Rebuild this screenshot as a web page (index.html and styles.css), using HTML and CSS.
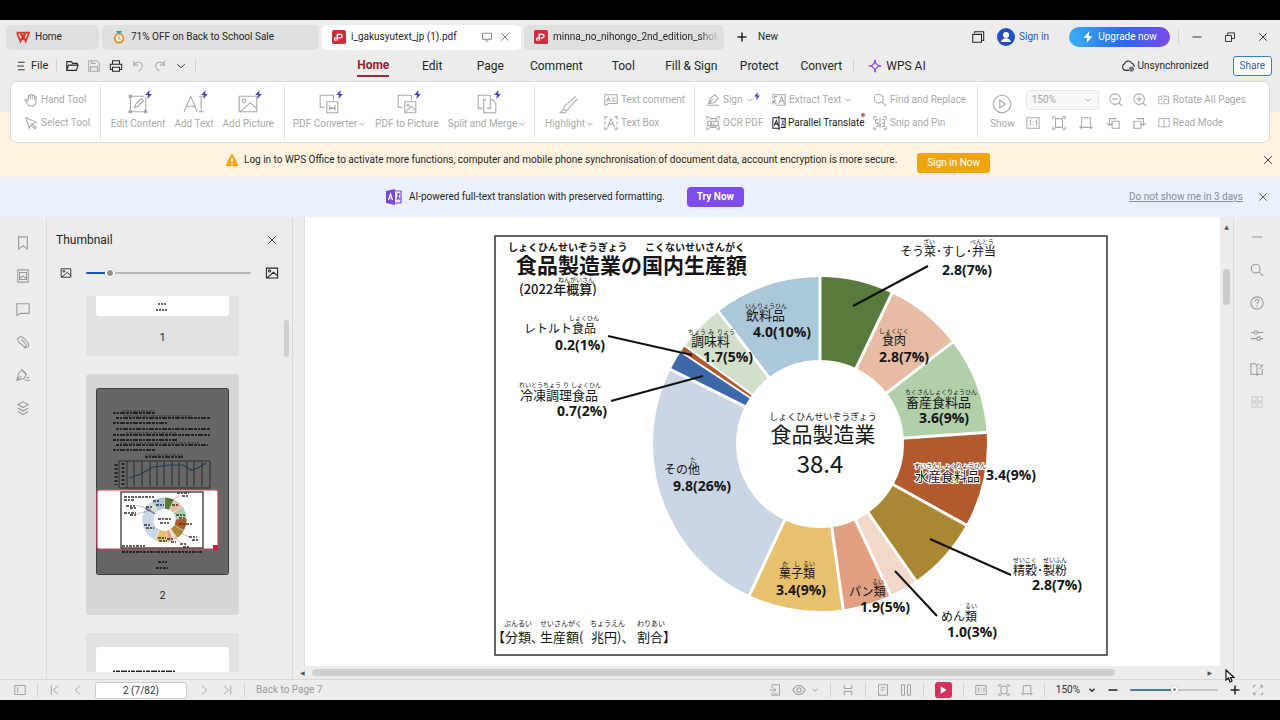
FILE: index.html
```html
<!DOCTYPE html>
<html lang="en">
<head>
<meta charset="utf-8">
<title>i_gakusyutext_jp (1).pdf - WPS Office</title>
<link rel="stylesheet" href="styles.css">
</head>
<body>
<svg class="sprite" aria-hidden="true">
  <symbol id="close" viewBox="0 0 16 16"><path d="M3 3l10 10M13 3L3 13"/></symbol>
  <symbol id="bolt" viewBox="0 0 16 16"><path class="solid" d="M10 0L2 9h5l-1 7 8-9H9z"/></symbol>
  <symbol id="caret" viewBox="0 0 16 16"><path d="M3 5.500l5 5 5-5"/></symbol>
  <symbol id="prev" viewBox="0 0 16 16"><path d="M10.500 2l-6 6 6 6"/></symbol>
  <symbol id="next" viewBox="0 0 16 16"><path d="M5.500 2l6 6-6 6"/></symbol>
  <symbol id="first" viewBox="0 0 16 16"><path d="M3 2v12M12 2L6 8l6 6"/></symbol>
  <symbol id="last" viewBox="0 0 16 16"><path d="M13 2v12M4 2l6 6-6 6"/></symbol>
  <symbol id="menu" viewBox="0 0 16 16"><path d="M4 3h9M3 8h9M4 13h9"/></symbol>
  <symbol id="open" viewBox="0 0 16 16"><path d="M2 13V3h5l2 2h5v2M2 13l2-6h11l-2 6z"/></symbol>
  <symbol id="save" viewBox="0 0 16 16"><path d="M2 2h9l3 3v9H2zM4 14V9h8v5M5 2v3h5"/></symbol>
  <symbol id="print" viewBox="0 0 16 16"><path d="M4 6V2h8v4M4 12H1.500V6h13v6H12M4 9.500h8V14H4z"/></symbol>
  <symbol id="undo" viewBox="0 0 16 16"><path d="M3 2v5h5M3 7c3-5 10-4 10 1 0 3-2 4-4 6"/></symbol>
  <symbol id="redo" viewBox="0 0 16 16"><path d="M13 2v5H8M13 7C10 2 3 3 3 8c0 3 2 4 4 6"/></symbol>
  <symbol id="screen" viewBox="0 0 16 16"><path d="M2 3h12v8H2zM6 13.500h4"/></symbol>
  <symbol id="plus" viewBox="0 0 16 16"><path d="M8 2v12M2 8h12"/></symbol>
  <symbol id="minus" viewBox="0 0 16 16"><path d="M2 8h12"/></symbol>
  <symbol id="windows" viewBox="0 0 16 16"><path d="M2 5h10v9H2zM4 3.500V2h10.500v10H13"/></symbol>
  <symbol id="restore" viewBox="0 0 16 16"><path d="M2 6h8v8H2zM5 6V2.500h9V10h-4"/></symbol>
  <symbol id="cloud" viewBox="0 0 16 16"><path d="M9 13H5a4 4 0 01-1-7.500 4.500 4.500 0 018.500-.5A3.500 3.500 0 0115 9"/><circle cx="12" cy="11.500" r="3" fill="#778" stroke="none"/></symbol>
  <symbol id="pdf" viewBox="0 0 16 16"><rect x="0" y="0" width="16" height="16" rx="2" fill="#d6293a" stroke="none"/><path d="M6 12V5h3.500a1.800 1.800 0 010 4H4.500a1.300 1.300 0 100 2.500" stroke="#fff" stroke-width="1.500"/></symbol>
  <symbol id="hand" viewBox="0 0 16 16"><path d="M5 10L3 7.500c-1-1-2.500 0-1.500 1.500l3 4.500c2 2.500 8 2 9-2l.5-6.500c0-1.300-1.800-1.300-1.800 0V8M5 8V3.500C5 2 7 2 7 3.500V7M7 3c0-2 2.500-2 2.500 0v4M9.500 3.500c0-1.500 2.500-1.500 2.500 0V8"/></symbol>
  <symbol id="arrow" viewBox="0 0 16 16"><path d="M2 2l12 5-5 2 5 4-1.500 1.500L8 10.500 6 14z"/></symbol>
  <symbol id="edit" viewBox="0 0 20 20"><path d="M4 3h12M4 17h12M3 4v12M17 4v12M7 13l1-3 5-5 2 2-5 5z"/><path class="solid" d="M1.500 1.500h3v3h-3zM15.500 15.500h3v3h-3zM1.500 15.500h3v3h-3z"/></symbol>
  <symbol id="addtext" viewBox="0 0 20 20"><path d="M1 17L7 3l6 14M3 12h8M14 3h5M14 17h5M16.500 3v14"/></symbol>
  <symbol id="picture" viewBox="0 0 20 20"><path d="M2 3h16v14H2zM3 17l9-8 6 5"/><circle cx="6.500" cy="7" r="1.500"/></symbol>
  <symbol id="convert" viewBox="0 0 20 20"><path d="M6 13H2V2h12v5M8 8h10v10H8zM10.500 11v4l2.500-2 2.500 2v-4"/></symbol>
  <symbol id="topic" viewBox="0 0 20 20"><path d="M6 13H2V2h12v5M8 8h10v10H8zM9 17l5-5 4 4"/><circle cx="11" cy="11" r="1"/></symbol>
  <symbol id="split" viewBox="0 0 20 20"><path d="M6 14H2V2h11v3M9 6H7v12h11V9l-3-3h-2v8h-3"/></symbol>
  <symbol id="marker" viewBox="0 0 20 20"><path d="M16 3L6 12l-1 3 3 1 10-11M5 15l-3 3h5l1-2"/></symbol>
  <symbol id="note" viewBox="0 0 16 16"><path d="M1 2h14v10H5l-3 2H1zM3 10l2-5 2 5M4 8h2M9 6h4M9 9h4"/></symbol>
  <symbol id="textbox" viewBox="0 0 16 16"><path d="M1 4V1h3M12 1h3v3M15 12v3h-3M4 15H1v-3M1 6v4M15 6v4M4 13l4-10 4 10M5.500 9h5"/></symbol>
  <symbol id="sign" viewBox="0 0 16 16"><path d="M1 14h14M3 12l2-6 5-4 4 4-4 5zM4 11l4-4"/></symbol>
  <symbol id="ocr" viewBox="0 0 16 16"><path d="M1 4V1h3M12 1h3v3M15 12v3h-3M4 15H1v-3M4 3h8v3M4 13h8M2 6h12v5H2zM5 10l1-3 1 3M9 7v3"/></symbol>
  <symbol id="extract" viewBox="0 0 16 16"><path d="M1 6V2h14v12H5M1 9l4 4M1 13V9h4M8 12l3-8 3 8M9 9h4M6 4H3v3"/></symbol>
  <symbol id="translate" viewBox="0 0 16 16"><path d="M9 2H1v12h8M8 0v16M10 3h5v10h-5M2.500 11L5 5l2 6M3.500 9H6"/><path d="M11 6h3M12.500 5v2l-1.500 4M12 8l2 3" stroke="#5a4fd0"/></symbol>
  <symbol id="search" viewBox="0 0 16 16"><circle cx="6.500" cy="6.500" r="5"/><path d="M10 10l5 5"/></symbol>
  <symbol id="snip" viewBox="0 0 16 16"><path d="M1 4V1h3M12 1h3v3M15 12v3h-3M4 15H1v-3M6 4H3v4h3v4H3M8 2v12M10 4h3v8h-3M10 8h3"/></symbol>
  <symbol id="play" viewBox="0 0 20 20"><circle cx="10" cy="10" r="8"/><path d="M8 6.500v7l5-3.500z"/></symbol>
  <symbol id="zoomout" viewBox="0 0 16 16"><circle cx="7" cy="7" r="6"/><path d="M11.500 11.500L15 15M4 7h6"/></symbol>
  <symbol id="zoomin" viewBox="0 0 16 16"><circle cx="7" cy="7" r="6"/><path d="M11.500 11.500L15 15M4 7h6M7 4v6"/></symbol>
  <symbol id="rotateall" viewBox="0 0 16 16"><path d="M6 13H1V3h4v4H2M9 3h5v10H8V7h6M6 1l3 2-2 2"/></symbol>
  <symbol id="book" viewBox="0 0 16 16"><path d="M1 2h6l1 1 1-1h6v11H9l-1 1-1-1H1zM8 3v11"/></symbol>
  <symbol id="actual" viewBox="0 0 16 16"><path d="M1 2h14v12H1zM4 6l1-1v6M11 6l1-1v6M8 6v1M8 9v1"/></symbol>
  <symbol id="fitpage" viewBox="0 0 16 16"><path d="M4 3h8v10H4zM4 1H1v3M12 1h3v3M4 15H1v-3M12 15h3v-3"/></symbol>
  <symbol id="fitwidth" viewBox="0 0 16 16"><path d="M3 11V2h10v9M1 13h14M3 11l-2 2 2 2M13 11l2 2-2 2"/></symbol>
  <symbol id="rotl" viewBox="0 0 16 16"><path d="M7 6h8v8H7zM12 3H4v8M1 8l3 3 3-3"/></symbol>
  <symbol id="rotr" viewBox="0 0 16 16"><path d="M1 6h8v8H1zM4 3h8v8M9 8l3 3 3-3"/></symbol>
  <symbol id="bookmark" viewBox="0 0 16 16"><path d="M3 1h10v14l-5-4-5 4z"/></symbol>
  <symbol id="thumbs" viewBox="0 0 16 16"><path d="M2 1h12v14H2zM4 4h8v8H4zM4 11l4-3 4 3"/></symbol>
  <symbol id="comment" viewBox="0 0 16 16"><path d="M1 2h14v11H5l-3 2H1z"/></symbol>
  <symbol id="clip" viewBox="0 0 16 16"><path d="M6 5l5 5c2 2-1 4-2 3L3 8C0 5 4 0 8 3l5 5c4 4-1 8-4 6"/></symbol>
  <symbol id="signature" viewBox="0 0 16 16"><path d="M1 14l2-8 4-4 5 5-3 5-8 2 5-5M10 14h6M12 11h3M6 2l6 6"/></symbol>
  <symbol id="layers" viewBox="0 0 16 16"><path d="M8 1l6 3-6 3.500L2 4zM2 8l6 3.500L14 8M2 12l6 3.500 6-3.500"/></symbol>
  <symbol id="help" viewBox="0 0 16 16"><circle cx="8" cy="8" r="7"/><path d="M6 6c0-3 4.500-2.500 4 0 0 1.500-2 1.500-2 3.500M8 11v1.500"/></symbol>
  <symbol id="sliders" viewBox="0 0 16 16"><path d="M1 4h4M8 4h7M1 11h7M12 11h3"/><circle cx="6.500" cy="4" r="2"/><circle cx="10" cy="11" r="2"/></symbol>
  <symbol id="readmode" viewBox="0 0 16 16"><path d="M8 4v11l-1-1H1V2h5l2 2 2-2M14 8v6H9l-1 1M11 3l3 2M11 8l4-5"/></symbol>
  <symbol id="grid" viewBox="0 0 16 16"><path d="M2 2h5v5H2zM9 2h5v5H9zM2 9h5v5H2zM9 9h5v5H9z"/></symbol>
  <symbol id="sidebar" viewBox="0 0 16 16"><path d="M1 2h14v12H1zM5 4v8"/></symbol>
  <symbol id="phone" viewBox="0 0 16 16"><path d="M4 5V1h10v14H4v-4M1 8h8M6 5l3 3-3 3M7 13h4"/></symbol>
  <symbol id="eye" viewBox="0 0 16 16"><path d="M1 8c4-7 10-7 14 0-4 7-10 7-14 0z"/><circle cx="8" cy="8" r="2.500"/></symbol>
  <symbol id="flow" viewBox="0 0 16 16"><path d="M3 1v5h10V1M3 15v-5h10v5"/></symbol>
  <symbol id="single" viewBox="0 0 16 16"><path d="M2 1h12v14H2zM5 5h6M5 8h4"/></symbol>
  <symbol id="double" viewBox="0 0 16 16"><path d="M2 1h4v14H2zM10 1h4v14h-4z"/></symbol>
  <symbol id="full" viewBox="0 0 16 16"><path d="M5 2H2v3M11 2h3v3M10 6l4-4M5 14H2v-3M2 14l4-4M14 11v3h-3"/></symbol>
  <symbol id="donut" viewBox="0 0 614 421">
    <g fill="none" stroke-width="83" transform="rotate(-90 326 209)">
      <circle cx="326" cy="209" r="125.500" pathLength="360" stroke="#587b3d" stroke-dasharray="25.500 360"/>
      <circle cx="326" cy="209" r="125.500" pathLength="360" stroke="#e8bca2" stroke-dasharray="27 360" stroke-dashoffset="-25.500"/>
      <circle cx="326" cy="209" r="125.500" pathLength="360" stroke="#b0d0a9" stroke-dasharray="34 360" stroke-dashoffset="-52.500"/>
      <circle cx="326" cy="209" r="125.500" pathLength="360" stroke="#b15a2e" stroke-dasharray="33 360" stroke-dashoffset="-86"/>
      <circle cx="326" cy="209" r="125.500" pathLength="360" stroke="#aa8733" stroke-dasharray="26 360" stroke-dashoffset="-119"/>
      <circle cx="326" cy="209" r="125.500" pathLength="360" stroke="#f2d8c9" stroke-dasharray="10 360" stroke-dashoffset="-145"/>
      <circle cx="326" cy="209" r="125.500" pathLength="360" stroke="#e0a081" stroke-dasharray="17 360" stroke-dashoffset="-155"/>
      <circle cx="326" cy="209" r="125.500" pathLength="360" stroke="#e8c16f" stroke-dasharray="33 360" stroke-dashoffset="-172"/>
      <circle cx="326" cy="209" r="125.500" pathLength="360" stroke="#cad6e4" stroke-dasharray="91.500 360" stroke-dashoffset="-205"/>
      <circle cx="326" cy="209" r="125.500" pathLength="360" stroke="#3e69a8" stroke-dasharray="7 360" stroke-dashoffset="-296.500"/>
      <circle cx="326" cy="209" r="125.500" pathLength="360" stroke="#b15a2e" stroke-dasharray="2.500 360" stroke-dashoffset="-303.500"/>
      <circle cx="326" cy="209" r="125.500" pathLength="360" stroke="#d2dfca" stroke-dasharray="16.500 360" stroke-dashoffset="-306"/>
      <circle cx="326" cy="209" r="125.500" pathLength="360" stroke="#abc8da" stroke-dasharray="37.500 360" stroke-dashoffset="-322.500"/>
    </g>
    <g stroke="#fff" stroke-width="3">
      <path d="M326 127V40"/>
      <path d="M326 127V40" transform="rotate(25.500 326 209)"/>
      <path d="M326 127V40" transform="rotate(52.500 326 209)"/>
      <path d="M326 127V40" transform="rotate(86 326 209)"/>
      <path d="M326 127V40" transform="rotate(119 326 209)"/>
      <path d="M326 127V40" transform="rotate(145 326 209)"/>
      <path d="M326 127V40" transform="rotate(155 326 209)"/>
      <path d="M326 127V40" transform="rotate(172 326 209)"/>
      <path d="M326 127V40" transform="rotate(205 326 209)"/>
      <path d="M326 127V40" transform="rotate(296.500 326 209)"/>
      <path d="M326 127V40" stroke-width="2" transform="rotate(303.500 326 209)"/>
      <path d="M326 127V40" stroke-width="2" transform="rotate(306 326 209)"/>
      <path d="M326 127V40" transform="rotate(322.500 326 209)"/>
    </g>
    <path d="M359 71l75-40M114 101l84 19M117 166l92-25M436 304l81 36M401 336l42 45" fill="none" stroke="#111" stroke-width="2"/>
  </symbol>
</svg>

<div class="app">
  <header class="tabs">
    <button class="tab tab-home"><svg class="i14" viewBox="0 0 16 16"><path d="M1 3h14l-4 10-3-7-3 7L1 3M5 3l3 7 3-7" stroke="#d9382c" stroke-width="2"/></svg>Home</button>
    <button class="tab tab-sale"><svg class="i14" viewBox="0 0 16 16"><circle cx="8" cy="9.500" r="5" fill="#fff3d8" stroke="#e78a2c" stroke-width="2"/><path d="M8 7v3l2 1" stroke="#e78a2c"/><path d="M5 2h6M8 1v3" stroke="#2a9bb5" stroke-width="2"/></svg>71% OFF on Back to School Sale</button>
    <div class="tab active"><svg class="i14"><use href="#pdf"/></svg><span class="grow">i_gakusyutext_jp (1).pdf</span><svg class="i12 gray"><use href="#screen"/></svg><button class="plain gray" aria-label="Close tab"><svg class="i12"><use href="#close"/></svg></button></div>
    <button class="tab tab-doc"><svg class="i14"><use href="#pdf"/></svg><span class="fade">minna_no_nihongo_2nd_edition_shok</span></button>
    <button class="plain new"><svg class="i12 semi"><use href="#plus"/></svg>New</button>
    <div class="win">
      <button class="plain" aria-label="Windows"><svg class="i14"><use href="#windows"/></svg></button>
      <button class="plain signin"><svg class="i18" viewBox="0 0 18 18"><circle cx="9" cy="9" r="9" fill="#234fc0" stroke="none"/><circle cx="9" cy="7" r="3" fill="#fff" stroke="none"/><path d="M4 14c1-5 9-5 10 0z" fill="#fff" stroke="none"/></svg>Sign in</button>
      <button class="upgrade"><svg class="i12"><use href="#bolt"/></svg>Upgrade now</button>
      <i class="sep"></i>
      <button class="plain ctl" aria-label="Minimize"><svg class="i12"><use href="#minus"/></svg></button>
      <button class="plain ctl" aria-label="Restore"><svg class="i12"><use href="#restore"/></svg></button>
      <button class="plain ctl" aria-label="Close"><svg class="i12"><use href="#close"/></svg></button>
    </div>
  </header>

  <nav class="menubar">
    <div class="quick">
      <button class="plain file"><svg class="i12"><use href="#menu"/></svg>File</button>
      <i class="sep"></i>
      <button class="plain" aria-label="Open"><svg class="i14"><use href="#open"/></svg></button>
      <button class="plain dim" aria-label="Save"><svg class="i14"><use href="#save"/></svg></button>
      <button class="plain" aria-label="Print"><svg class="i14"><use href="#print"/></svg></button>
      <button class="plain dim" aria-label="Undo"><svg class="i14"><use href="#undo"/></svg></button>
      <button class="plain dim" aria-label="Redo"><svg class="i14"><use href="#redo"/></svg></button>
      <button class="plain" aria-label="More"><svg class="i12"><use href="#caret"/></svg></button>
      <i class="sep"></i>
    </div>
    <div class="menus">
      <button class="m60 current"><span>Home</span></button><button class="m58">Edit</button><button class="m58">Page</button><button class="m74">Comment</button><button class="m60">Tool</button><button class="m76">Fill &amp; Sign</button><button class="m60">Protect</button><button class="m64">Convert</button>
      <i class="sep"></i>
      <button class="ai"><svg class="i14" viewBox="0 0 16 16"><path d="M8 1v14" stroke="#8240e8" stroke-width="2"/><path d="M1 8h14" stroke="#b54fe0" stroke-width="2"/><path d="M8 4l4 4-4 4-4-4z" fill="#ede9f5" stroke="#7a3bd8"/></svg>WPS AI</button>
    </div>
    <div class="sync"><span><svg class="i14"><use href="#cloud"/></svg>Unsynchronized</span><button class="share">Share</button></div>
  </nav>

  <section class="ribbon">
    <div class="group two g-tools">
      <button><svg class="i14"><use href="#hand"/></svg>Hand Tool</button>
      <button><svg class="i14"><use href="#arrow"/></svg>Select Tool</button>
    </div>
    <div class="group g-edit">
      <button class="big"><svg class="i20"><use href="#edit"/></svg><svg class="pro"><use href="#bolt"/></svg>Edit Content</button>
      <button class="big"><svg class="i20"><use href="#addtext"/></svg><svg class="pro"><use href="#bolt"/></svg>Add Text</button>
      <button class="big"><svg class="i20"><use href="#picture"/></svg><svg class="pro"><use href="#bolt"/></svg>Add Picture</button>
    </div>
    <div class="group g-conv">
      <button class="big"><svg class="i20"><use href="#convert"/></svg><svg class="pro"><use href="#bolt"/></svg><span>PDF Converter<svg class="i8"><use href="#caret"/></svg></span></button>
      <button class="big"><svg class="i20"><use href="#topic"/></svg><svg class="pro"><use href="#bolt"/></svg>PDF to Picture</button>
      <button class="big"><svg class="i20"><use href="#split"/></svg><svg class="pro"><use href="#bolt"/></svg><span>Split and Merge<svg class="i8"><use href="#caret"/></svg></span></button>
    </div>
    <div class="group g-mark">
      <button class="big"><svg class="i20"><use href="#marker"/></svg><span>Highlight<svg class="i8"><use href="#caret"/></svg></span></button>
      <div class="two">
        <button><svg class="i14"><use href="#note"/></svg>Text comment</button>
        <button><svg class="i14"><use href="#textbox"/></svg>Text Box</button>
      </div>
    </div>
    <div class="group g-misc">
      <div class="two w57">
        <button><svg class="i14"><use href="#sign"/></svg>Sign<svg class="i8"><use href="#caret"/></svg><svg class="i8 blue up"><use href="#bolt"/></svg></button>
        <button><svg class="i14"><use href="#ocr"/></svg>OCR PDF</button>
      </div>
      <div class="two w92">
        <button><svg class="i14"><use href="#extract"/></svg>Extract Text<svg class="i8"><use href="#caret"/></svg></button>
        <button class="strong"><svg class="i14"><use href="#translate"/></svg>Parallel Translate<i class="dot"></i></button>
      </div>
      <div class="two">
        <button><svg class="i14"><use href="#search"/></svg>Find and Replace</button>
        <button><svg class="i14"><use href="#snip"/></svg>Snip and Pin</button>
      </div>
    </div>
    <div class="group g-view">
      <button class="big"><svg class="i20"><use href="#play"/></svg>Show</button>
      <div class="two">
        <div class="row">
          <label class="combo"><select aria-label="Zoom"><option>150%</option></select><svg class="i8"><use href="#caret"/></svg></label>
          <button aria-label="Zoom out"><svg class="i14"><use href="#zoomout"/></svg></button>
          <button aria-label="Zoom in"><svg class="i14"><use href="#zoomin"/></svg></button>
        </div>
        <div class="row">
          <button aria-label="Actual size"><svg class="i14"><use href="#actual"/></svg></button>
          <button aria-label="Fit page"><svg class="i14"><use href="#fitpage"/></svg></button>
          <button aria-label="Fit width"><svg class="i14"><use href="#fitwidth"/></svg></button>
          <button aria-label="Rotate left"><svg class="i14"><use href="#rotl"/></svg></button>
          <button aria-label="Rotate right"><svg class="i14"><use href="#rotr"/></svg></button>
        </div>
      </div>
      <div class="two last">
        <button><svg class="i12"><use href="#rotateall"/></svg>Rotate All Pages</button>
        <button><svg class="i12"><use href="#book"/></svg>Read Mode</button>
      </div>
    </div>
  </section>

  <section class="banner warn">
    <div class="msg"><svg class="i14" viewBox="0 0 16 16"><path d="M8 2l6 12H2z" fill="#f0a818" stroke="#f0a818" stroke-width="2" stroke-linejoin="round"/><path d="M8 6v4M8 12v1" stroke="#fff" stroke-width="2"/></svg>Log in to WPS Office to activate more functions, computer and mobile phone synchronisation of document data, account encryption is more secure.</div>
    <button class="cta">Sign in Now</button>
    <button class="plain x" aria-label="Close"><svg class="i12"><use href="#close"/></svg></button>
  </section>
  <section class="banner info">
    <div class="msg"><svg class="i16" viewBox="0 0 16 16"><path d="M0 2l9-2v16l-9-2z" fill="#7a48dc" stroke="none"/><path d="M2.500 11l2-6 2 6M3 9h3" stroke="#fff"/><path d="M9 2h6v12H9M11 5h3M12.500 4v2l-1.500 5M12 8l2 3" stroke="#7a48dc"/></svg>AI-powered full-text translation with preserved formatting.</div>
    <button class="cta">Try Now</button>
    <div class="tail"><a href="#">Do not show me in 3 days</a><button class="plain" aria-label="Close"><svg class="i12"><use href="#close"/></svg></button></div>
  </section>

  <main class="work">
    <aside class="rail">
      <button class="plain" aria-label="Bookmarks"><svg class="i14"><use href="#bookmark"/></svg></button>
      <button class="plain" aria-label="Thumbnails"><svg class="i14"><use href="#thumbs"/></svg></button>
      <button class="plain" aria-label="Comments"><svg class="i14"><use href="#comment"/></svg></button>
      <button class="plain" aria-label="Attachments"><svg class="i14"><use href="#clip"/></svg></button>
      <button class="plain" aria-label="Signatures"><svg class="i14"><use href="#signature"/></svg></button>
      <button class="plain" aria-label="Layers"><svg class="i14"><use href="#layers"/></svg></button>
    </aside>
    <aside class="panel">
      <div class="panel-head"><span>Thumbnail</span><button class="plain" aria-label="Close panel"><svg class="i12"><use href="#close"/></svg></button></div>
      <div class="panel-zoom"><svg class="i12"><use href="#picture"/></svg><input class="thumb-range" type="range" value="12" aria-label="Thumbnail size"><svg class="i14"><use href="#picture"/></svg></div>
      <div class="panel-body">
        <div class="thumbs">
          <div class="card card-1"><div class="sheet"><svg viewBox="0 0 133 20"><path d="M62 8h8M60 14h12" stroke="#333" stroke-width="1.500" stroke-dasharray="2 1"/></svg></div><span>1</span></div>
          <div class="card card-2">
            <div class="sheet">
              <svg viewBox="0 0 133 187">
                <rect width="133" height="187" fill="#666"/>
                <path d="M17 25h42M20 30h94M17 35h54M20 41h94M17 47h98M17 52h64M20 57h92M17 62h42M49 69h38" stroke="#222" stroke-width="2" stroke-dasharray="3 1 2 1 5 1"/>
                <path d="M26 23h33M28 28h68M30 45h50M24 55h80M49 67h38" stroke="#333" stroke-dasharray="2 1 4 1"/>
                <path d="M23 73h91v27H23zM31 73v27M38 74v24M46 74v24M54 74v24M61 74v24M68 74v24M76 74v24M83 74v24M91 74v24M98 74v24M106 74v24" fill="none" stroke="#2c2c2c" stroke-width="1"/>
                <path d="M33 90l12-4 12-7 18-2 12 0 8 5 7-2 8-5" fill="none" stroke="#173e49"/>
                <path d="M20 76v21M27 75v23" stroke="#222" stroke-width="3" stroke-dasharray="2 2"/>
                <path d="M26 164h80M62 174h9M60 180h12" stroke="#222" stroke-width="2" stroke-dasharray="3 1 2 1"/>
                <rect x="1" y="102" width="121" height="59" rx="2" fill="#fff" stroke="#d24259"/>
                <rect x="25" y="104" width="82" height="56" fill="#fff" stroke="#222"/>
                <use href="#donut" x="25" y="104" width="82" height="56"/>
                <path d="M28 109h30M28 112h10M81 105h12M86 108h7M30 118h9M34 120h7M28 125h12M34 127h7M50 119h6M57 113h7M60 117h8M76 117h7M80 127h9M83 130h7M83 136h14M48 137h6M50 140h8M62 131h14M64 135h9M62 150h8M63 153h8M71 151h7M75 154h5M93 149h8M96 152h7M84 156h6M87 159h6M26 158h23" stroke="#333" stroke-width="1.500" stroke-dasharray="3 1 2 1"/>
                <rect x="117" y="157" width="5" height="5" fill="#c8203f" stroke="none"/>
              </svg>
            </div><span>2</span></div>
          <div class="card card-3"><div class="sheet"><svg viewBox="0 0 133 28"><path d="M17 25h62" stroke="#222" stroke-width="3" stroke-dasharray="2 1 4 1 6 1"/></svg></div></div>
        </div>
        <div class="thumb-scroll"><i></i></div>
      </div>
    </aside>
    <section class="viewer">
      <div class="page">
        <svg class="figure" viewBox="0 0 614 421" role="img" aria-label="食品製造業の国内生産額">
          <rect x="1" y="1" width="612" height="419" fill="#fff" stroke="#333" stroke-width="1.500"/>
          <use href="#donut" width="614" height="421"/>
          <g class="r10 heavy"><text x="14" y="16">しょくひんせいぞうぎょう</text><text x="151" y="16">こくないせいさんがく</text></g>
          <text class="k21 heavy" x="22" y="38">食品製造業の国内生産額</text>
          <text class="k13 mid" x="25" y="59">(2022年概算)</text>
          <g class="r6">
            <text x="64" y="47">ねんがいさん</text>
            <text x="75" y="85">しょくひん</text>
            <text x="25" y="152">れいとうちょう</text><text x="69" y="152">り</text><text x="77" y="152">しょくひん</text>
            <text x="251" y="73">いんりょうひん</text>
            <text x="194" y="99">ちょう</text><text x="214" y="99">み</text><text x="223" y="99">りょう</text>
            <text x="429" y="9">ざい</text><text x="476" y="9">べんとう</text>
            <text x="385" y="98">しょくにく</text>
            <text x="411" y="159">ちくさんしょくりょうひん</text>
            <text class="halo" x="420" y="233">すいさんしょくりょうひん</text>
            <text x="519" y="327">せいこく</text><text x="549" y="327">せいふん</text>
            <text x="471" y="373">るい</text><text x="378" y="349">るい</text>
            <text x="288" y="331">か</text><text x="300" y="331">し</text><text x="309" y="331">るい</text>
            <text x="196" y="227">た</text>
          </g>
          <g class="k12"><text x="30" y="98">レトルト食品</text><text x="406" y="21">そう菜･すし･弁当</text><text x="519" y="340">精穀･製粉</text><text x="447" y="386">めん類</text><text x="355" y="361">パン類</text><text x="285" y="343">菓子類</text><text x="170" y="239">その他</text><text x="388" y="110">食肉</text></g>
          <g class="k13"><text x="26" y="165">冷凍調理食品</text><text x="252" y="85">飲料品</text><text x="197" y="111">調味料</text><text x="412" y="172">畜産食料品</text><text class="halo" x="421" y="246">水産食料品</text></g>
          <g class="num"><text x="61" y="115">0.2(1%)</text><text x="63" y="181">0.7(2%)</text><text x="259" y="102">4.0(10%)</text><text x="209" y="127">1.7(5%)</text><text x="448" y="40">2.8(7%)</text><text x="385" y="127">2.8(7%)</text><text x="425" y="188">3.6(9%)</text><text x="492" y="245">3.4(9%)</text><text x="538" y="355">2.8(7%)</text><text x="453" y="402">1.0(3%)</text><text x="366" y="377">1.9(5%)</text><text x="282" y="360">3.4(9%)</text><text x="179" y="256">9.8(26%)</text></g>
          <g text-anchor="middle"><text class="r9" x="329" y="185">しょくひんせいぞうぎょう</text><text class="k21" x="329" y="207">食品製造業</text><text class="total" x="326" y="238">38.4</text></g>
          <g class="r7"><text x="10" y="391">ぶんるい</text><text x="46" y="391">せいさんがく</text><text x="96" y="391">ちょうえん</text><text x="143" y="391">わりあい</text></g>
          <g class="k13"><text x="-2" y="407">【分類、</text><text x="46" y="407">生産額(</text><text x="97" y="407">兆円)、</text><text x="143" y="407">割合】</text></g>
        </svg>
      </div>
      <div class="vbar"><b>▲</b><i></i></div>
      <div class="hbar"><b>◀</b><i></i><b>▶</b></div>
    </section>
    <aside class="rail right">
      <button class="plain" aria-label="Collapse"><svg class="i14"><use href="#minus"/></svg></button>
      <button class="plain" aria-label="Search"><svg class="i14"><use href="#search"/></svg></button>
      <button class="plain" aria-label="Help"><svg class="i14"><use href="#help"/></svg></button>
      <button class="plain" aria-label="Settings"><svg class="i14"><use href="#sliders"/></svg></button>
      <button class="plain" aria-label="Read"><svg class="i14"><use href="#readmode"/></svg></button>
      <button class="plain faint" aria-label="Apps"><svg class="i14"><use href="#grid"/></svg></button>
    </aside>
  </main>

  <footer class="status">
    <button class="plain" aria-label="Sidebar"><svg class="i12"><use href="#sidebar"/></svg></button><i class="sep"></i>
    <button class="plain" aria-label="First page"><svg class="i12"><use href="#first"/></svg></button>
    <button class="plain" aria-label="Previous page"><svg class="i12"><use href="#prev"/></svg></button>
    <input class="pageno" type="text" value="2 (7/82)" aria-label="Page">
    <button class="plain" aria-label="Next page"><svg class="i12"><use href="#next"/></svg></button>
    <button class="plain" aria-label="Last page"><svg class="i12"><use href="#last"/></svg></button>
    <i class="sep"></i><button class="plain">Back to Page 7</button>
    <div class="status-right">
      <button class="plain" aria-label="Send to phone"><svg class="i12"><use href="#phone"/></svg></button>
      <button class="plain eye" aria-label="View"><svg class="i14"><use href="#eye"/></svg><svg class="i8"><use href="#caret"/></svg></button><i class="sep"></i>
      <button class="plain" aria-label="Continuous"><svg class="i12"><use href="#flow"/></svg></button><i class="sep"></i>
      <button class="plain" aria-label="Single page"><svg class="i12"><use href="#single"/></svg></button>
      <button class="plain" aria-label="Two pages"><svg class="i12"><use href="#double"/></svg></button><i class="sep"></i>
      <button class="play" aria-label="Play"><svg class="i12" viewBox="0 0 16 16"><path d="M5 3l8 5-8 5z" fill="#fff" stroke="none"/></svg></button><i class="sep"></i>
      <button class="plain" aria-label="Actual size"><svg class="i12"><use href="#actual"/></svg></button>
      <button class="plain" aria-label="Fit page"><svg class="i12"><use href="#fitpage"/></svg></button>
      <button class="plain" aria-label="Fit width"><svg class="i12"><use href="#fitwidth"/></svg></button><i class="sep"></i>
      <button class="plain zoomval">150%<svg class="i8 bold"><use href="#caret"/></svg></button>
      <button class="plain dark" aria-label="Zoom out"><svg class="i12 semi"><use href="#minus"/></svg></button>
      <input class="zoom-range" type="range" value="50" aria-label="Zoom level">
      <button class="plain dark" aria-label="Zoom in"><svg class="i12 semi"><use href="#plus"/></svg></button>
      <button class="plain" aria-label="Full screen"><svg class="i12"><use href="#full"/></svg></button>
    </div>
  </footer>
</div>
<svg class="cursor" viewBox="0 0 10 14" aria-hidden="true"><path d="M1 1v10l2.500-2 1.500 4 2-1-1.500-3.500H9z" fill="#fff" stroke="#111"/></svg>
</body>
</html>
```
FILE: styles.css
```css
* { box-sizing: border-box; }
body {
  margin: 0;
  background: #000;
  color: #262626;
  font: 10px/16px Roboto, "Noto Sans", "Noto Sans CJK JP", sans-serif;
}
button, input, select { font: inherit; color: inherit; margin: 0; }
button { display: flex; align-items: center; border: 0; background: none; padding: 0; white-space: nowrap; }
svg { flex: none; fill: none; stroke: currentColor; stroke-width: 1.2; }
.solid { fill: currentColor; stroke: none; }
.sprite { position: absolute; width: 0; height: 0; }
.i8 { width: 8px; height: 8px; stroke-width: 2; }
.i12 { width: 12px; height: 12px; }
.i14 { width: 14px; height: 14px; }
.i16 { width: 16px; height: 16px; }
.i18 { width: 18px; height: 18px; }
.i20 { width: 22px; height: 22px; stroke-width: 1; }
.semi { stroke-width: 2; }
.bold { stroke-width: 3; }
.gray { color: #777; }
.sep { width: 1px; height: 14px; background: #d2d2d2; flex: none; }

.app { height: 100vh; padding: 20px 0; display: flex; flex-direction: column; }
.app > * { background: #ececec; flex: none; }

.tabs { height: 31px; display: flex; align-items: center; gap: 3px; padding: 3px 11px 0 6px; }
.tab { height: 25px; display: flex; align-items: center; gap: 5px; padding: 0 10px; border-radius: 5px; background: #dfdfdf; overflow: hidden; white-space: nowrap; }
.tab-home { width: 93px; }
.tab-sale { width: 217px; }
.active { width: 199px; background: #fff; }
.active .plain { margin-left: 1px; }
.grow { flex: 1; }
.tab-doc { width: 200px; }
.fade { -webkit-mask-image: linear-gradient(to right, #000 88%, transparent); mask-image: linear-gradient(to right, #000 88%, transparent); }
.new { gap: 10px; margin-left: 9px; }
.win { margin-left: auto; display: flex; align-items: center; gap: 12px; }
.signin { gap: 4px; color: #2458ad; }
.upgrade { width: 101px; justify-content: center; height: 20px; border-radius: 10px; gap: 4px; margin-left: 8px; margin-right: -4px; color: #fff; background: linear-gradient(90deg, #36aef5, #2e67ee 55%, #7a4be8); }
.ctl { width: 12px; margin-right: 9px; }
.ctl:last-child { margin-right: 0; }

.menubar { height: 30px; display: grid; grid-template-columns: 1fr auto 1fr; align-items: center; padding: 0 8px 0 15px; }
.quick { display: flex; align-items: center; gap: 8px; }
.file { gap: 4px; font-size: 11px; }
.dim { color: #aaa; }
.menus { display: flex; align-items: center; font-size: 12px; margin-right: 18px; }
.menus button { justify-content: center; height: 24px; }
.m58 { width: 58px; }
.m60 { width: 60px; }
.m64 { width: 64px; }
.m74 { width: 74px; }
.m76 { width: 76px; }
.current { font-weight: 700; color: #a01c2c; }
.current span { border-bottom: 2px solid #8f3045; line-height: 20px; }
.menus .ai { gap: 4px; margin-left: 14px; }
.sync { display: flex; justify-content: flex-end; align-items: center; gap: 24px; }
.sync span { display: flex; align-items: center; gap: 3px; }
.share { height: 20px; border: 1px solid #3b7fc4; border-radius: 3px; padding: 0 6px; color: #2763a8; background: #fff; }

.app > .ribbon { height: 62px; display: flex; border: solid transparent; border-width: 0 10px; color: #a9a9a9; position: relative; z-index: 0; background: linear-gradient(#ececec 50%, #fdf3e0 50%) border-box; }
.ribbon::before { content: ""; position: absolute; inset: 0; z-index: -1; background: #fff; border: 1px solid #d9d9d6; border-radius: 7px; }
.group { display: flex; align-items: center; margin: 3px 0; border-right: 1px solid #e2e2e2; }
.group:last-child { border: 0; flex: 1; }
.two { display: flex; flex-direction: column; justify-content: center; gap: 7px; padding-bottom: 2px; }
.group.two { align-items: flex-start; }
.two button { gap: 3px; height: 16px; }
.big { position: relative; flex-direction: column; gap: 1px; }
.big > span { display: flex; align-items: center; gap: 1px; }
.pro { position: absolute; left: calc(50% + 6px); top: -3px; width: 9px; height: 9px; color: #4543bd; }
.blue { color: #4543bd; }
.up { align-self: flex-start; margin-left: -4px; }
.g-tools { width: 91px; padding-left: 14px; }
.g-edit { width: 184px; justify-content: center; gap: 9px; }
.g-conv { width: 250px; justify-content: center; gap: 9px; }
.g-mark { width: 160px; padding-left: 10px; gap: 10px; }
.g-misc { width: 283px; padding-left: 11px; gap: 9px; }
.w57 { width: 57px; }
.w92 { width: 92px; }
.strong { color: #222; }
.two .strong { gap: 2px; }
.dot { flex: none; width: 4px; height: 4px; border-radius: 50%; background: #e05260; align-self: flex-start; margin-left: -6px; margin-top: -2px; }
.g-view { padding-left: 12px; gap: 11px; }
.row { display: flex; align-items: center; justify-content: space-between; gap: 10px; height: 16px; }
.combo { display: grid; grid-template-columns: 1fr 14px; align-items: center; width: 73px; height: 20px; border: 1px solid #e6e6e6; border-radius: 3px; background: #f7f7f7; }
.combo select { grid-area: 1 / 1 / 2 / 3; appearance: none; border: 0; background: none; padding: 0 5px; height: 18px; }
.combo svg { grid-area: 1 / 2; }

.banner { display: grid; align-items: center; white-space: nowrap; }
.msg { display: flex; align-items: center; gap: 5px; }
.app > .warn { height: 34px; background: #fef3e0; grid-template-columns: auto auto 1fr; column-gap: 20px; padding: 0 6px 0 225px; }
.cta { height: 20px; padding: 0 10px; border-radius: 3px; color: #fff; background: #f0a50c; }
.warn .cta { margin-top: 5px; }
.x, .tail { justify-self: end; }
.app > .info { height: 40px; background: #ebf1fc; grid-template-columns: auto auto 1fr; column-gap: 22px; padding: 0 11px 0 386px; }
.info .msg { gap: 7px; }
.info .cta { background: #7c4de8; font-weight: 700; border-radius: 4px; }
.tail { display: flex; align-items: center; gap: 14px; color: #555; }
.tail a { color: #858d9c; }

.app > .work { flex: 1; min-height: 0; display: grid; grid-template-columns: 47px 246px 1fr 47px; }
.rail { display: flex; flex-direction: column; align-items: center; gap: 19px; padding-top: 19px; border-right: 1px solid #dcdcdc; color: #999; }
.rail.right { border: 0; border-left: 1px solid #dcdcdc; padding-top: 13px; }
.faint { color: #ccc; }
.panel { display: flex; flex-direction: column; min-height: 0; border-right: 1px solid #d8d8d8; padding-bottom: 7px; }
.panel-head { display: flex; justify-content: space-between; align-items: center; padding: 15px 14px 0 9px; font-size: 12px; }
.panel-zoom { display: flex; align-items: center; gap: 14px; padding: 17px 13px 0; height: 33px; }
.panel-zoom svg { stroke-width: 1.5; }
.panel-body { flex: 1; min-height: 0; margin-top: 15px; display: flex; justify-content: space-between; overflow: hidden; padding: 0 3px 0 39px; }
.thumbs { width: 153px; display: flex; flex-direction: column; gap: 18px; font-size: 11px; }
.card { flex: none; padding: 0 10px; border-radius: 4px; background: #e1e1e1; text-align: center; }
.card-1 { height: 60px; border-radius: 0 0 4px 4px; }
.card-1 .sheet { border-radius: 0 0 3px 3px; margin-bottom: 14px; }
.card-2 { height: 241px; padding-top: 14px; background: #d6d6d6; }
.card-2 .sheet { margin-bottom: 13px; }
.card-3 { padding-top: 14px; height: 60px; }
.sheet { background: #fff; border-radius: 3px; overflow: hidden; }
.sheet svg { display: block; width: 100%; }
.card-3 .sheet { height: 46px; }
.thumb-scroll { width: 5px; padding-top: 24px; }
.thumb-scroll i { display: block; height: 37px; border-radius: 3px; background: #cfcfcf; }

input[type="range"] { appearance: none; background: none; height: 12px; min-width: 0; }
input[type="range"]::-webkit-slider-runnable-track { height: 2px; border-radius: 1px; }
input[type="range"]::-webkit-slider-thumb { appearance: none; border-radius: 50%; border: 2px solid #fff; background: #8b8f94; box-shadow: 0 0 1px #777; }
.thumb-range { flex: 1; }
.thumb-range::-webkit-slider-runnable-track { background: linear-gradient(90deg, #1458b8 13%, #b5b5b5 13%); }
.thumb-range::-webkit-slider-thumb { width: 10px; height: 10px; margin-top: -4px; }
.zoom-range { width: 88px; }
.zoom-range::-webkit-slider-runnable-track { background: linear-gradient(90deg, #4a7c97 50%, #c4c4c4 50%); }
.zoom-range::-webkit-slider-thumb { width: 7px; height: 7px; margin-top: -3px; }

.viewer { min-width: 0; min-height: 0; display: grid; grid-template-columns: 1fr 13px; grid-template-rows: 1fr 13px; padding-left: 11px; }
.page { background: #fff; overflow: hidden; display: flex; align-items: flex-start; padding: 18px 0 0 189px; border-left: 1px solid #ddd; }
.figure { width: 614px; height: 421px; fill: #151515; stroke: none; font-family: "Noto Sans CJK JP", sans-serif; overflow: visible; }
.figure path { fill: none; }
.r6 { font-size: 6px; }
.r7 { font-size: 7px; }
.r9 { font-size: 9px; }
.r10 { font-size: 10px; }
.k12 { font-size: 12px; }
.k13 { font-size: 13px; }
.k21 { font-size: 21px; }
.mid { font-weight: 500; }
.heavy { font-weight: 700; }
.num { font: 700 14px "Open Sans", "Noto Sans", sans-serif; }
.total { font: 24px "Noto Sans CJK JP", sans-serif; }
.halo { paint-order: stroke; stroke: #fff; stroke-width: 2px; }
.vbar { display: flex; flex-direction: column; align-items: center; padding-top: 4px; }
.vbar b, .hbar b { font-size: 6px; line-height: 12px; color: #555; font-family: "DejaVu Sans", sans-serif; }
.vbar i { width: 7px; height: 36px; margin-top: 36px; border-radius: 4px; background: #cbcbcb; }
.hbar { display: flex; align-items: center; gap: 7px; margin-left: -4px; padding-right: 8px; }
.hbar i { flex: 1; height: 7px; border-radius: 4px; background: #cfcfcf; margin-right: 85px; }

.status { height: 21px; display: flex; align-items: center; gap: 11px; padding: 0 16px 0 14px; border-top: 1px solid #d6d6d6; color: #9a9a9a; }
.pageno { width: 92px; height: 17px; border: 1px solid #ccc; border-radius: 3px; background: #fff; color: #333; text-align: center; padding: 0; }
.status-right { margin-left: auto; display: flex; align-items: center; gap: 11px; }
.eye { gap: 5px; }
.play { width: 17px; height: 16px; justify-content: center; border-radius: 3px; background: #d6315b; }
.zoomval { gap: 8px; color: #333; }
.dark { color: #222; }

.cursor { position: absolute; left: 1225px; top: 669px; width: 10px; height: 14px; }
```
